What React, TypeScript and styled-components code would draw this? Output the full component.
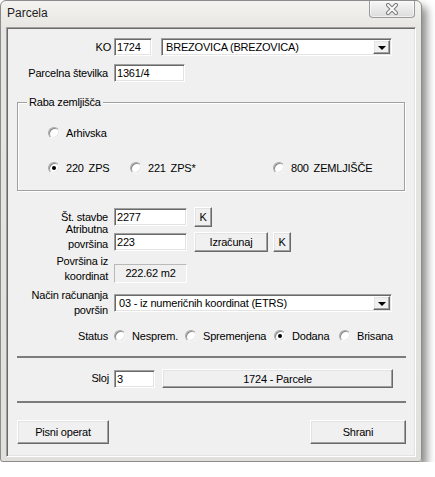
import React from "react";
import styled, { createGlobalStyle, css } from "styled-components";

const GlobalStyle = createGlobalStyle`
  html, body {
    margin: 0;
    padding: 0;
    background: #fff;
  }
  body {
    font-family: "Liberation Sans", Arial, sans-serif;
    font-size: 11px;
    letter-spacing: -0.2px;
    color: #000;
  }
`;

const sunken = css`
  border: 1px solid;
  border-color: #a0a0a0 #fff #fff #a0a0a0;
  box-shadow: inset 1px 1px 0 #696969, inset -1px -1px 0 #e3e3e3;
`;

const raised = css`
  border: 1px solid;
  border-color: #fff #696969 #696969 #fff;
  box-shadow: inset -1px -1px 0 #a0a0a0, inset 1px 1px 0 #e3e3e3;
`;

const Window = styled.div`
  width: 422px;
  height: 462px;
  box-sizing: border-box;
  display: flex;
  flex-direction: column;
  padding: 0 5px 4px;
  background: linear-gradient(180deg, #f4f3f1 0%, #e8e6e2 26px, #e2e0dc 100%);
  border: 1px solid #8c8c8c;
  border-radius: 6px 6px 3px 3px;
  box-shadow: 5px 6px 9px rgba(0, 0, 0, 0.45);
`;

const TitleBar = styled.div`
  height: 26px;
  display: flex;
  justify-content: space-between;
  align-items: flex-start;
  flex: none;
`;

const Title = styled.div`
  margin: 5px 0 0 1px;
  font-size: 12px;
  letter-spacing: 0;
  line-height: 14px;
  color: #1e1e1e;
`;

const CloseButton = styled.div`
  width: 46px;
  height: 17px;
  box-sizing: border-box;
  margin-right: 1px;
  display: flex;
  align-items: center;
  justify-content: center;
  border: 1px solid #9a9a9a;
  border-top: none;
  border-radius: 0 0 4px 4px;
  background: linear-gradient(180deg, #f7f7f7, #dcdcdc);
  box-shadow: inset 0 0 0 1px rgba(255, 255, 255, 0.6);
`;

const Panel = styled.div`
  flex: 1;
  box-sizing: border-box;
  display: flex;
  flex-direction: column;
  padding: 10px 9px 0 10px;
  background: #f0f0f0;
  ${sunken};
`;

const FormRow = styled.div<{ $mt: number; $h: number }>`
  display: flex;
  align-items: center;
  height: ${p => p.$h}px;
  margin-top: ${p => p.$mt}px;
  flex: none;
`;

const FieldLabel = styled.div<{ $end?: boolean; $shift?: number }>`
  width: ${p => 91 + (p.$shift || 0)}px;
  margin-right: ${p => 6 - (p.$shift || 0)}px;
  flex: none;
  text-align: right;
  line-height: 15px;
  white-space: nowrap;
  ${p =>
    p.$end &&
    css`
      align-self: flex-end;
      margin-bottom: -1px;
    `}
`;

const TextBox = styled.div<{ $w: number; $ml?: number }>`
  width: ${p => p.$w}px;
  height: 18px;
  margin-left: ${p => p.$ml || 0}px;
  box-sizing: border-box;
  flex: none;
  padding-left: 2px;
  line-height: 16px;
  background: #fff;
  white-space: nowrap;
  overflow: hidden;
  ${sunken};
`;

const ReadBox = styled.div<{ $w: number }>`
  width: ${p => p.$w}px;
  height: 19px;
  box-sizing: border-box;
  flex: none;
  align-self: flex-end;
  text-align: center;
  line-height: 17px;
  border: 1px solid;
  border-color: #b9b9b9 #fff #fff #b9b9b9;
`;

const Combo = styled.div<{ $w: number; $ml?: number }>`
  width: ${p => p.$w}px;
  height: 18px;
  margin-left: ${p => p.$ml || 0}px;
  box-sizing: border-box;
  flex: none;
  display: flex;
  align-items: stretch;
  background: #fff;
  padding: 1px;
  ${sunken};
`;

const ComboText = styled.div`
  flex: 1;
  padding-left: 3px;
  line-height: 14px;
  white-space: nowrap;
  overflow: hidden;
`;

const DropButton = styled.div`
  width: 17px;
  box-sizing: border-box;
  display: flex;
  align-items: center;
  justify-content: center;
  background: #f0f0f0;
  ${raised};
  &::after {
    content: "";
    border-left: 4px solid transparent;
    border-right: 4px solid transparent;
    border-top: 4px solid #000;
    margin-top: 1px;
  }
`;

const Button = styled.div<{ $w: number; $h?: number; $ml?: number }>`
  width: ${p => p.$w}px;
  height: ${p => p.$h || 20}px;
  margin-left: ${p => p.$ml || 0}px;
  box-sizing: border-box;
  flex: none;
  display: flex;
  align-items: center;
  justify-content: center;
  background: #f0f0f0;
  white-space: nowrap;
  ${raised};
`;

const GroupBox = styled.div`
  position: relative;
  margin: 20px 1px 0 0;
  height: 89px;
  box-sizing: border-box;
  flex: none;
  padding-left: 30px;
  display: flex;
  flex-direction: column;
  border: 1px solid #a0a0a0;
  box-shadow: inset 1px 1px 0 #fff, 1px 1px 0 #fff;
`;

const Legend = styled.div`
  position: absolute;
  top: -8px;
  left: 9px;
  padding: 0 2px;
  line-height: 14px;
  background: #f0f0f0;
`;

const RadioRow = styled.div<{ $mt: number }>`
  display: flex;
  align-items: center;
  height: 14px;
  margin-top: ${p => p.$mt}px;
`;

const RadioItem = styled.div<{ $w?: number }>`
  display: flex;
  align-items: center;
  gap: 6px;
  flex: none;
  width: ${p => (p.$w ? `${p.$w}px` : "auto")};
  white-space: nowrap;
  line-height: 14px;
`;

const RadioDot = styled.span<{ $on?: boolean }>`
  position: relative;
  width: 12px;
  height: 12px;
  box-sizing: border-box;
  border-radius: 50%;
  background: #fff;
  flex: none;
  border: 1px solid;
  border-color: #a8a8a8 #f4f4f4 #f4f4f4 #a8a8a8;
  box-shadow: inset 1px 1px 0 #8a8a8a, inset -1px -1px 0 #e6e6e6;
  ${p =>
    p.$on &&
    css`
      &::after {
        content: "";
        position: absolute;
        left: 3px;
        top: 3px;
        width: 4px;
        height: 4px;
        border-radius: 50%;
        background: #000;
      }
    `}
`;

const Wide = styled.span`
  word-spacing: 2px;
`;

const Separator = styled.div<{ $mt: number }>`
  margin-top: ${p => p.$mt}px;
  height: 2px;
  background: #7c7c7c;
  flex: none;
`;

const Footer = styled.div`
  display: flex;
  justify-content: space-between;
  margin-top: 17px;
`;

function Radio({ label, on, w }: { label: React.ReactNode; on?: boolean; w?: number }) {
  return (
    <RadioItem $w={w}>
      <RadioDot $on={on} />
      <span>{label}</span>
    </RadioItem>
  );
}

function CloseGlyph() {
  return (
    <svg width="14" height="12" viewBox="0 0 14 12">
      <path d="M3 2 L11 10 M11 2 L3 10" stroke="#7a7a7a" strokeWidth="4" strokeLinecap="round" fill="none" />
      <path d="M3 2 L11 10 M11 2 L3 10" stroke="#fdfdfd" strokeWidth="2" strokeLinecap="round" fill="none" />
    </svg>
  );
}

export default function App() {
  return (
    <>
      <GlobalStyle />
      <Window>
        <TitleBar>
          <Title>Parcela</Title>
          <CloseButton>
            <CloseGlyph />
          </CloseButton>
        </TitleBar>
        <Panel>
          <FormRow $mt={0} $h={18}>
            <FieldLabel $shift={3}>KO</FieldLabel>
            <TextBox $w={38}>1724</TextBox>
            <Combo $w={231} $ml={9}>
              <ComboText>BREZOVICA (BREZOVICA)</ComboText>
              <DropButton />
            </Combo>
          </FormRow>
          <FormRow $mt={8} $h={18}>
            <FieldLabel>Parcelna številka</FieldLabel>
            <TextBox $w={71}>1361/4</TextBox>
          </FormRow>

          <GroupBox>
            <Legend>Raba zemljišča</Legend>
            <RadioRow $mt={23}>
              <Radio label="Arhivska" />
            </RadioRow>
            <RadioRow $mt={21}>
              <Radio label={<Wide>220 ZPS</Wide>} on w={82} />
              <Radio label={<Wide>221 ZPS*</Wide>} w={143} />
              <Radio label={<Wide>800 ZEMLJIŠČE</Wide>} />
            </RadioRow>
          </GroupBox>

          <FormRow $mt={16} $h={20}>
            <FieldLabel>Št. stavbe</FieldLabel>
            <TextBox $w={73}>2277</TextBox>
            <Button $w={18} $ml={7}>K</Button>
          </FormRow>
          <FormRow $mt={6} $h={18}>
            <FieldLabel $end>
              Atributna
              <br />
              površina
            </FieldLabel>
            <TextBox $w={73}>223</TextBox>
            <Button $w={74} $ml={7}>Izračunaj</Button>
            <Button $w={18} $ml={5}>K</Button>
          </FormRow>
          <FormRow $mt={13} $h={19}>
            <FieldLabel $end>
              Površina iz
              <br />
              koordinat
            </FieldLabel>
            <ReadBox $w={73}>222.62 m2</ReadBox>
          </FormRow>
          <FormRow $mt={11} $h={18}>
            <FieldLabel>
              Način računanja
              <br />
              površin
            </FieldLabel>
            <Combo $w={278}>
              <ComboText>03 - iz numeričnih koordinat (ETRS)</ComboText>
              <DropButton />
            </Combo>
          </FormRow>
          <FormRow $mt={17} $h={14}>
            <FieldLabel>Status</FieldLabel>
            <RadioRow $mt={0}>
              <Radio label="Nesprem." w={71} />
              <Radio label="Spremenjena" w={89} />
              <Radio label="Dodana" on w={65} />
              <Radio label="Brisana" />
            </RadioRow>
          </FormRow>

          <Separator $mt={13} />
          <FormRow $mt={11} $h={19}>
            <FieldLabel $shift={1}>Sloj</FieldLabel>
            <TextBox $w={41}>3</TextBox>
            <Button $w={231} $h={19} $ml={7}>1724 - Parcele</Button>
          </FormRow>
          <Separator $mt={13} />

          <Footer>
            <Button $w={92} $h={24}>Pisni operat</Button>
            <Button $w={96} $h={24}>Shrani</Button>
          </Footer>
        </Panel>
      </Window>
    </>
  );
}
